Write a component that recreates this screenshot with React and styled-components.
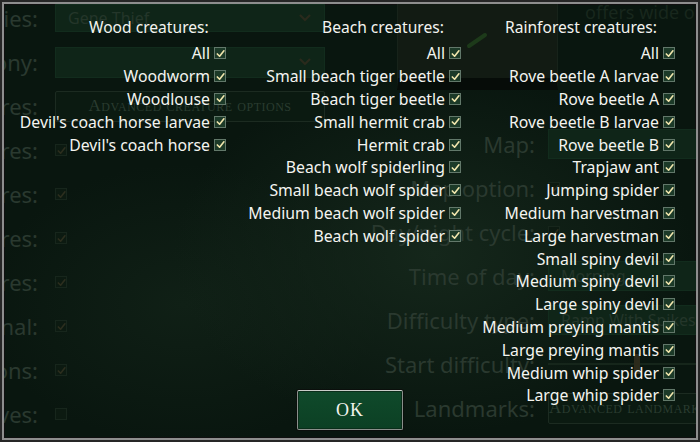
import React from "react";
import styled, { createGlobalStyle } from "styled-components";

const GlobalStyle = createGlobalStyle`
  html, body {
    margin: 0;
    padding: 0;
    background: #1c1c1c;
  }
  body {
    font-family: "Noto Sans", "Open Sans", sans-serif;
  }
`;

const woodCreatures = [
  "All",
  "Woodworm",
  "Woodlouse",
  "Devil's coach horse larvae",
  "Devil's coach horse"
];

const beachCreatures = [
  "All",
  "Small beach tiger beetle",
  "Beach tiger beetle",
  "Small hermit crab",
  "Hermit crab",
  "Beach wolf spiderling",
  "Small beach wolf spider",
  "Medium beach wolf spider",
  "Beach wolf spider"
];

const rainforestCreatures = [
  "All",
  "Rove beetle A larvae",
  "Rove beetle A",
  "Rove beetle B larvae",
  "Rove beetle B",
  "Trapjaw ant",
  "Jumping spider",
  "Medium harvestman",
  "Large harvestman",
  "Small spiny devil",
  "Medium spiny devil",
  "Large spiny devil",
  "Medium preying mantis",
  "Large preying mantis",
  "Medium whip spider",
  "Large whip spider"
];

const columns = [
  { title: "Wood creatures:", items: woodCreatures, width: 222, offset: 85 },
  { title: "Beach creatures:", items: beachCreatures, width: 235, offset: 96 },
  { title: "Rainforest creatures:", items: rainforestCreatures, width: 214, offset: 44 }
];

// faded settings screen behind the dialog
const leftRows = [
  { label: "Species:", kind: "select", value: "Gene Thief" },
  { label: "Colony:", kind: "select", value: "" },
  { label: "Creatures:", kind: "button", value: "Advanced creature options" },
  { label: "Creatures:", kind: "check", on: true },
  { label: "Creatures:", kind: "check", on: true },
  { label: "Creatures:", kind: "check", on: true },
  { label: "Creatures:", kind: "check", on: true },
  { label: "Nocturnal:", kind: "check", on: true },
  { label: "Animations:", kind: "check", on: true },
  { label: "Waves:", kind: "check", on: false }
];

const rightRows = [
  { label: "Map:", kind: "box", value: "" },
  { label: "Map option:", kind: "check", on: true },
  { label: "Day/night cycle:", kind: "check", on: true },
  { label: "Time of day:", kind: "box", value: "Morning" },
  { label: "Difficulty type:", kind: "box", value: "Ramp With Spikes" },
  { label: "Start difficulty:", kind: "slider" },
  { label: "Landmarks:", kind: "button", value: "Advanced landmarks" }
];

const Screen = styled.div`
  width: 700px;
  height: 442px;
  box-sizing: border-box;
  padding: 2px;
  background: #262626;
`;

const Frame = styled.div`
  position: relative;
  height: 100%;
  box-sizing: border-box;
  border: 2px solid #8e8e8e;
  box-shadow: inset 0 0 0 1px #101010;
  overflow: hidden;
  background:
    radial-gradient(ellipse 260px 180px at 430px 250px, #15271b 0%, rgba(21, 39, 27, 0) 100%),
    radial-gradient(ellipse 200px 140px at 180px 300px, #102016 0%, rgba(16, 32, 22, 0) 100%),
    #09160f;
`;

const Backdrop = styled.div`
  display: flex;
  height: 100%;
`;

const LeftForm = styled.div`
  display: grid;
  grid-template-columns: 34px 270px;
  grid-auto-rows: 44px;
  column-gap: 17px;
  margin-top: -8px;
  align-items: center;
  flex-shrink: 0;
`;

const FaintLabel = styled.div`
  display: flex;
  justify-content: flex-end;
  overflow: hidden;
  white-space: nowrap;
  font-size: 22px;
  color: #2a392f;
`;

const SelectBox = styled.div`
  display: flex;
  align-items: center;
  justify-content: space-between;
  height: ${p => p.$h || 26}px;
  padding: 0 12px;
  background: #0f2518;
  border: 1px solid #122c1d;
  font-size: 16px;
  color: #24362a;
  white-space: nowrap;
  overflow: hidden;
`;

const GhostButton = styled.div`
  display: flex;
  align-items: center;
  justify-content: center;
  height: 29px;
  border: 1px solid #1c2b21;
  border-radius: 2px;
  background: #0b1a11;
  font-family: "Liberation Serif", serif;
  font-variant: small-caps;
  font-size: 17px;
  letter-spacing: 0.5px;
  color: #2a3c30;
  white-space: nowrap;
  overflow: hidden;
`;

const FaintCheck = styled.div`
  width: 10px;
  height: 10px;
  border: 1px solid #17261c;
  background: #0c1a11;
  display: flex;
  align-items: center;
  justify-content: center;
`;

const Chevron = styled.svg`
  width: 14px;
  height: 10px;
  flex-shrink: 0;
`;

const RightArea = styled.div`
  display: flex;
  flex-direction: column;
  flex: 1;
  min-width: 0;
`;

const TopBlock = styled.div`
  display: flex;
  height: 118px;
`;

const Preview = styled.div`
  flex-shrink: 0;
  margin: -4px 0 0 72px;
  width: 161px;
  height: 90px;
  box-sizing: border-box;
  border: 1px solid #17231a;
  border-bottom: 12px solid #060c08;
  background: #121b13;
  display: flex;
  align-items: center;
  justify-content: center;
`;

const Description = styled.div`
  margin: -4px 0 0 27px;
  font-size: 18px;
  color: #18271d;
  white-space: nowrap;
`;

const RightForm = styled.div`
  display: grid;
  grid-template-columns: 210px 1fr;
  grid-auto-rows: 44px;
  column-gap: 13px;
  align-items: center;
`;

const Slider = styled.div`
  position: relative;
  height: 2px;
  margin-right: -20px;
  background: #16261b;
`;

const SliderThumb = styled.div`
  position: absolute;
  left: 86px;
  top: -9px;
  width: 6px;
  height: 20px;
  background: #2b2a1b;
`;

const Overlay = styled.div`
  position: absolute;
  inset: 0;
  display: flex;
  flex-direction: column;
  padding-top: 12px;
  box-sizing: border-box;
`;

const Columns = styled.div`
  display: flex;
  flex: 1;
  min-height: 0;
  align-items: flex-start;
`;

const Column = styled.div`
  display: flex;
  flex-direction: column;
  align-items: flex-end;
  width: ${p => p.$width}px;
  flex-shrink: 0;
`;

const ColumnTitle = styled.header`
  align-self: stretch;
  padding-left: ${p => p.$offset}px;
  height: 23px;
  line-height: 23px;
  margin-bottom: 3px;
  font-size: 15.6px;
  color: #f3f3ef;
  white-space: nowrap;
`;

const Row = styled.label`
  display: flex;
  align-items: center;
  gap: 4px;
  height: 22.8px;
  font-size: 15.8px;
  color: #f4f4f0;
  white-space: nowrap;
`;

const Box = styled.span`
  display: flex;
  align-items: center;
  justify-content: center;
  width: 10px;
  height: 10px;
  border: 1px solid #62786a;
  background: #1c3a28;
  flex-shrink: 0;
`;

const Footer = styled.div`
  display: flex;
  justify-content: center;
  padding-bottom: 8px;
`;

const OkButton = styled.button`
  width: 106px;
  height: 40px;
  border: 1px solid #8a8f8b;
  border-top-color: #c9cdc9;
  border-radius: 2px;
  box-shadow: 0 0 0 1px #0b0f0c, inset 0 0 0 1px #0a2e1a;
  background: linear-gradient(#0f4a2b, #0c4024);
  color: #f3f3ee;
  font-family: "Liberation Serif", serif;
  font-size: 18px;
  letter-spacing: 1px;
  cursor: pointer;
`;

const CheckMark = ({ color = "#f1e6ad" }) => (
  <svg width="9" height="9" viewBox="0 0 10 10">
    <path
      d="M1.5 5.5 L4 8 L8.8 2"
      fill="none"
      stroke={color}
      strokeWidth="1.8"
      strokeLinecap="round"
      strokeLinejoin="round"
    />
  </svg>
);

const DownChevron = () => (
  <Chevron viewBox="0 0 14 10">
    <path d="M2 2 L7 7 L12 2" fill="none" stroke="#2a2a1c" strokeWidth="2.2" />
  </Chevron>
);

const FaintControl = ({ row }) => {
  if (row.kind === "select")
    return (
      <SelectBox $h={row.value ? 26 : 29}>
        <span>{row.value}</span>
        <DownChevron />
      </SelectBox>
    );
  if (row.kind === "box") return <SelectBox $h={28}>{row.value}</SelectBox>;
  if (row.kind === "button") return <GhostButton>{row.value}</GhostButton>;
  if (row.kind === "slider")
    return (
      <Slider>
        <SliderThumb />
      </Slider>
    );
  return (
    <FaintCheck>{row.on && <CheckMark color="#2c2e1e" />}</FaintCheck>
  );
};

const CreatureColumn = ({ title, items, width, offset }) => (
  <Column $width={width}>
    <ColumnTitle $offset={offset}>{title}</ColumnTitle>
    {items.map((name, i) => (
      <Row key={i}>
        {name}
        <Box>
          <CheckMark />
        </Box>
      </Row>
    ))}
  </Column>
);

const App = () => (
  <Screen>
    <GlobalStyle />
    <Frame>
      <Backdrop>
        <LeftForm>
          {leftRows.map((row, i) => (
            <React.Fragment key={i}>
              <FaintLabel>
                <span>{row.label}</span>
              </FaintLabel>
              <div>
                <FaintControl row={row} />
              </div>
            </React.Fragment>
          ))}
        </LeftForm>
        <RightArea>
          <TopBlock>
            <Preview>
              <svg width="30" height="20" viewBox="0 0 30 20">
                <path d="M6 16 L22 5" stroke="#1d3a1a" strokeWidth="4" strokeLinecap="round" />
              </svg>
            </Preview>
            <Description>offers wide open</Description>
          </TopBlock>
          <RightForm>
            {rightRows.map((row, i) => (
              <React.Fragment key={i}>
                <FaintLabel>
                  <span>{row.label}</span>
                </FaintLabel>
                <div>
                  <FaintControl row={row} />
                </div>
              </React.Fragment>
            ))}
          </RightForm>
        </RightArea>
      </Backdrop>
      <Overlay>
        <Columns>
          {columns.map(col => (
            <CreatureColumn key={col.title} {...col} />
          ))}
        </Columns>
        <Footer>
          <OkButton>OK</OkButton>
        </Footer>
      </Overlay>
    </Frame>
  </Screen>
);

export default App;
